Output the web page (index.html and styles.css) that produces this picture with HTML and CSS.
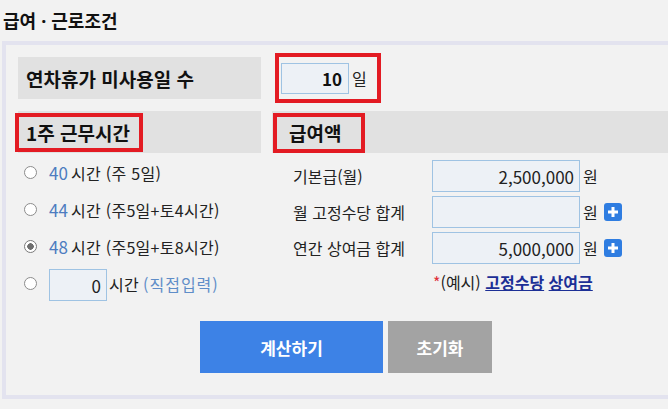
FILE: index.html
```html
<!DOCTYPE html>
<html lang="ko">
<head>
    <meta charset="UTF-8">
    <meta name="viewport" content="width=device-width, initial-scale=1.0">
    <title>급여 · 근로조건</title>
    <link rel="stylesheet" href="styles.css">
</head>
<body>

<h2 class="title">급여 <span class="dot">·</span> 근로조건</h2>

<div class="panel">
    <div class="row row-top">
        <div class="label-box">연차휴가 미사용일 수</div>
        <div class="leave-cell">
            <span class="mark leave-mark">
                <input type="text" class="field field-leave" value="10">
                <span class="unit">일</span>
            </span>
        </div>
    </div>

    <div class="row">
        <div class="head-box"><span class="mark head-mark">1주 근무시간</span></div>
        <div class="head-box"><span class="mark head-mark2">급여액</span></div>
    </div>

    <div class="row row-body">
        <div class="hours">
            <label class="opt"><input type="radio" name="hours" class="radio"><span class="hn">40</span>시간 (주 5일)</label>
            <label class="opt"><input type="radio" name="hours" class="radio"><span class="hn">44</span>시간 (주5일+토4시간)</label>
            <label class="opt"><input type="radio" name="hours" class="radio" checked><span class="hn">48</span>시간 (주5일+토8시간)</label>
            <label class="opt"><input type="radio" name="hours" class="radio"><input type="text" class="field field-hours" value="0"><span class="hs">시간</span><span class="direct">(직접입력)</span></label>
        </div>

        <div class="pay">
            <div class="pay-row">
                <span class="pay-label">기본급(월)</span>
                <input type="text" class="field field-pay" value="2,500,000">
                <span class="unit">원</span>
            </div>
            <div class="pay-row">
                <span class="pay-label">월 고정수당 합계</span>
                <input type="text" class="field field-pay" value="">
                <span class="unit">원</span>
                <span class="plus"><svg width="18" height="18" viewBox="0 0 18 18"><rect width="18" height="18" rx="3" fill="#2f7de1"/><path d="M9 4v10M4 9h10" stroke="#fff" stroke-width="3"/></svg></span>
            </div>
            <div class="pay-row">
                <span class="pay-label">연간 상여금 합계</span>
                <input type="text" class="field field-pay" value="5,000,000">
                <span class="unit">원</span>
                <span class="plus"><svg width="18" height="18" viewBox="0 0 18 18"><rect width="18" height="18" rx="3" fill="#2f7de1"/><path d="M9 4v10M4 9h10" stroke="#fff" stroke-width="3"/></svg></span>
            </div>
            <div class="example">
                <span class="star">*</span>(예시) <a href="#" class="ex-link">고정수당</a> <a href="#" class="ex-link">상여금</a>
            </div>
        </div>
    </div>

    <div class="actions">
        <button type="button" class="btn btn-calc">계산하기</button>
        <button type="button" class="btn btn-reset">초기화</button>
    </div>
</div>

</body>
</html>
```

FILE: styles.css
```css
html {
    overflow: hidden;
}

body {
    font-family: 'Noto Sans CJK KR', 'Noto Sans', sans-serif;
    background-color: #f2f2f2;
    color: #222;
    margin: 0;
    font-size: 16px;
}

.title {
    margin: 0;
    height: 41px;
    line-height: 40px;
    padding-left: 3px;
    font-size: 18px;
    font-weight: bold;
    color: #111;
}

.dot {
    font-family: 'Noto Sans', sans-serif;
}

.panel {
    margin-left: 2px;
    width: 688px;
    box-sizing: border-box;
    border: 4px solid #e3e3ef;
    background-color: #f2f2f2;
    padding: 12px 12px 22px 12px;
}

.row {
    display: grid;
    grid-template-columns: 243px 1fr;
    column-gap: 11px;
}

.row-top {
    margin-bottom: 12px;
}

.label-box {
    height: 42px;
    background-color: #e1e1e1;
    display: flex;
    align-items: center;
    padding-left: 8px;
    font-size: 19px;
    font-weight: bold;
    color: #111;
}

.leave-cell {
    display: flex;
    align-items: center;
}

.mark {
    outline: 4px solid #e31b23;
}

.leave-mark {
    display: flex;
    align-items: center;
    margin-left: 8px;
    width: 96px;
    height: 40px;
    outline-offset: 1px;
}

.field {
    box-sizing: border-box;
    border: 1px solid #9fc3e3;
    background-color: #edf1f6;
    font-family: 'Noto Sans CJK KR', 'Noto Sans', sans-serif;
    font-size: 17px;
    color: #222;
    text-align: right;
    padding: 0 5px;
    margin: 0;
    outline: none;
}

.field-leave {
    width: 68px;
    height: 31px;
    margin-left: 1px;
    font-size: 17px;
    font-weight: bold;
    padding-right: 6px;
    color: #111;
}

.unit {
    margin-left: 3px;
    font-size: 16px;
}

.head-box {
    height: 42px;
    background-color: #e1e1e1;
    display: flex;
    align-items: center;
    font-size: 19px;
    font-weight: bold;
    color: #111;
}

.head-mark {
    margin-left: 1px;
    height: 31px;
    line-height: 31px;
    width: 120px;
    box-sizing: border-box;
    padding-left: 7px;
    white-space: nowrap;
}

.head-mark2 {
    margin-left: 5px;
    margin-top: 2px;
    height: 32px;
    line-height: 32px;
    width: 84px;
    box-sizing: border-box;
    padding-left: 12px;
}

.hours {
    padding-top: 1px;
}

.opt {
    display: flex;
    align-items: center;
    height: 37px;
    font-size: 16px;
    color: #222;
    white-space: pre;
    letter-spacing: 0.3px;
}

.radio {
    appearance: none;
    -webkit-appearance: none;
    width: 13px;
    height: 13px;
    margin: 0 12px 0 6px;
    border: 1px solid #8c8c8c;
    border-radius: 50%;
    background-color: #fff;
    box-sizing: border-box;
}

.radio:checked {
    background: radial-gradient(circle, #6e6e6e 0 3px, #fff 3.5px);
    border-color: #7a7a7a;
}

.hn {
    color: #4d7cc0;
    margin-right: 3px;
    font-size: 17px;
    letter-spacing: 0;
}

.field-hours {
    width: 58px;
    height: 32px;
    margin-top: 3px;
    letter-spacing: 0;
}

.hs {
    margin-left: 2px;
}

.direct {
    color: #5f8dc8;
    margin-left: 4px;
    letter-spacing: 1px;
}

.pay {
    padding: 7px 0 0 21px;
}

.pay-row {
    display: flex;
    align-items: center;
    height: 32px;
    margin-bottom: 4px;
}

.pay-label {
    width: 139px;
    font-size: 16px;
}

.field-pay {
    width: 148px;
    height: 32px;
}

.plus {
    display: flex;
    margin-left: 6px;
}

.example {
    padding-left: 140px;
    height: 28px;
    line-height: 28px;
    font-size: 16px;
    white-space: nowrap;
}

.star {
    color: #e0303a;
}

.ex-link {
    color: #1c2f96;
    font-weight: bold;
    text-decoration: underline;
}

.actions {
    display: flex;
    justify-content: center;
    gap: 5px;
    margin-top: 19px;
}

.btn {
    height: 52px;
    border: none;
    color: #fff;
    font-family: 'Noto Sans CJK KR', 'Noto Sans', sans-serif;
    font-size: 17px;
    font-weight: bold;
    cursor: pointer;
}

.btn-calc {
    width: 183px;
    background-color: #3d82e6;
}

.btn-reset {
    width: 104px;
    background-color: #a3a3a3;
}
```
